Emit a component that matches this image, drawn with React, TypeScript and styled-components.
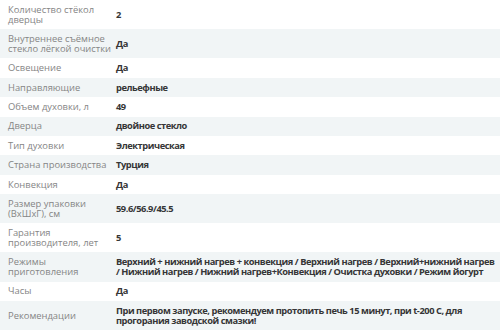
import styled, { createGlobalStyle } from "styled-components";

const GlobalStyle = createGlobalStyle`
  html, body {
    margin: 0;
    padding: 0;
    background: #ffffff;
  }
  body {
    font-family: "Open Sans", "Liberation Sans", sans-serif;
  }
`;

const Specs = styled.div`
  width: 500px;
  display: flex;
  flex-direction: column;
`;

const Row = styled.div<{ $shaded: boolean }>`
  display: grid;
  grid-template-columns: 108px 1fr;
  align-items: center;
  padding: 4.8px 2px 4.8px 8px;
  background: ${(p) => (p.$shaded ? "#f1f5f6" : "#ffffff")};
`;

const Label = styled.div`
  font-size: 9.4px;
  line-height: 9.8px;
  color: #858585;
  padding-right: 4px;
`;

const Value = styled.div`
  font-size: 9.3px;
  line-height: 9.8px;
  font-weight: 700;
  letter-spacing: -0.45px;
  color: #363636;
`;

const specs: [string, string][] = [
  ["Количество стёкол дверцы", "2"],
  ["Внутреннее съёмное стекло лёгкой очистки", "Да"],
  ["Освещение", "Да"],
  ["Направляющие", "рельефные"],
  ["Объем духовки, л", "49"],
  ["Дверца", "двойное стекло"],
  ["Тип духовки", "Электрическая"],
  ["Страна производства", "Турция"],
  ["Конвекция", "Да"],
  ["Размер упаковки (ВхШхГ), см", "59.6/56.9/45.5"],
  ["Гарантия производителя, лет", "5"],
  [
    "Режимы приготовления",
    "Верхний + нижний нагрев + конвекция / Верхний нагрев / Верхний+нижний нагрев / Нижний нагрев / Нижний нагрев+Конвекция / Очистка духовки / Режим йогурт",
  ],
  ["Часы", "Да"],
  [
    "Рекомендации",
    "При первом запуске, рекомендуем протопить печь 15 минут, при t-200 С, для прогорания заводской смазки!",
  ],
];

export default function App() {
  return (
    <>
      <GlobalStyle />
      <Specs>
        {specs.map(([label, value], i) => (
          <Row key={label} $shaded={i % 2 === 1}>
            <Label>{label}</Label>
            <Value>{value}</Value>
          </Row>
        ))}
      </Specs>
    </>
  );
}
